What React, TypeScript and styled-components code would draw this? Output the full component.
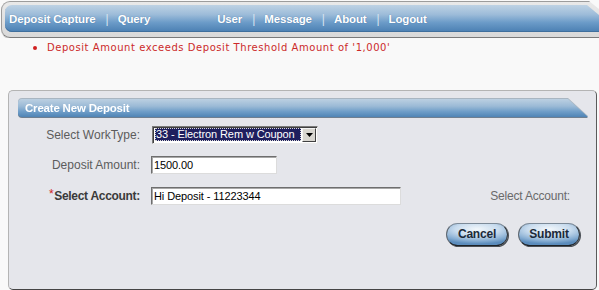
import type { FC } from "react";
import styled, { createGlobalStyle } from "styled-components";

const GlobalStyle = createGlobalStyle`
  html, body {
    margin: 0;
    padding: 0;
    background: #f9f9f9;
    font-family: "Liberation Sans", Arial, sans-serif;
  }
`;

const navLeft = ["Deposit Capture", "Query"];
const navRight = ["User", "Message", "About", "Logout"];

const NavItems: FC<{ items: string[] }> = ({ items }) => (
  <NavGroup>
    {items.map((item, i) => (
      <NavGroupItem key={item}>
        {i > 0 && <NavSep>|</NavSep>}
        <NavLink>{item}</NavLink>
      </NavGroupItem>
    ))}
  </NavGroup>
);

const App: FC = () => {
  return (
    <>
      <GlobalStyle />
      <Page>
        <NavFrame>
          <NavBar>
            <NavItems items={navLeft} />
            <NavRight>
              <NavItems items={navRight} />
            </NavRight>
          </NavBar>
        </NavFrame>

        <ErrorList>
          <ErrorItem>Deposit Amount exceeds Deposit Threshold Amount of '1,000'</ErrorItem>
        </ErrorList>

        <Panel>
          <PanelHeaderWrap>
            <PanelHeader>Create New Deposit</PanelHeader>
          </PanelHeaderWrap>

          <Form>
            <Row $height={30}>
              <Label>Select WorkType:</Label>
              <SelectBox>
                <SelectValue>33 - Electron Rem w Coupon</SelectValue>
                <SelectArrow>
                  <svg width="7" height="4" viewBox="0 0 7 4">
                    <path d="M0 0h7L3.5 4z" fill="#000" />
                  </svg>
                </SelectArrow>
              </SelectBox>
            </Row>
            <Row $height={30}>
              <Label>Deposit Amount:</Label>
              <TextInput $width={126}>1500.00</TextInput>
            </Row>
            <Row $height={32}>
              <Label $required>
                <Star>*</Star>Select Account:
              </Label>
              <TextInput $width={250}>Hi Deposit - 11223344</TextInput>
              <Hint>Select Account:</Hint>
            </Row>
            <Buttons>
              <PillButton>Cancel</PillButton>
              <PillButton>Submit</PillButton>
            </Buttons>
          </Form>
        </Panel>
      </Page>
    </>
  );
};

export default App;

const Page = styled.div`
  width: 599px;
  height: 290px;
  overflow: hidden;
  display: flex;
  flex-direction: column;
`;

const NavFrame = styled.div`
  margin: 1px 0 0 1px;
  height: 29px;
  padding: 3px 0 3px 3px;
  border: 1px solid #9c9c9c;
  border-right: none;
  border-bottom-color: #7a7a7a;
  border-radius: 9px 0 0 9px;
  background: linear-gradient(#e9e9e9, #d9d9d9);
  clip-path: polygon(0 0, calc(100% - 10px) 0, 100% 8px, 100% 100%, 0 100%);
  box-shadow: 0 1px 0 #d0d0d0;
`;

const NavBar = styled.div`
  height: 27px;
  display: flex;
  align-items: center;
  padding-left: 4px;
  border-radius: 7px 0 0 7px;
  background: linear-gradient(#bed2e4 0%, #9dbcd9 35%, #6b9bc8 65%, #4a7fb2 100%);
  box-shadow: inset 0 -1px 0 #3f6f9d;
  clip-path: polygon(0 0, calc(100% - 12px) 0, 100% 10px, 100% 100%, 0 100%);
`;

const NavGroup = styled.div`
  display: flex;
  align-items: center;
`;

const NavGroupItem = styled.span`
  display: flex;
  align-items: center;
`;

const NavRight = styled.div`
  margin-left: 67px;
`;

const NavLink = styled.span`
  color: #ffffff;
  font-weight: bold;
  font-size: 11.5px;
  letter-spacing: -0.15px;
  text-shadow: 0 0 1px rgba(40, 80, 130, 0.6);
`;

const NavSep = styled.span`
  color: #d6e3ef;
  font-size: 12px;
  margin: 0 9px 0 10px;
`;

const ErrorList = styled.ul`
  margin: 4px 0 0 0;
  padding: 0 0 0 47px;
  list-style: none;
`;

const ErrorItem = styled.li`
  position: relative;
  color: #cc2a2a;
  font-family: "DejaVu Sans", Verdana, sans-serif;
  font-size: 10px;
  letter-spacing: 0.55px;
  line-height: 12px;

  &::before {
    content: "";
    position: absolute;
    left: -14px;
    top: 4px;
    width: 4px;
    height: 4px;
    border-radius: 50%;
    background: #d02020;
  }
`;

const Panel = styled.div`
  margin: 36px 2px 0 8px;
  border: 1px solid #b4b4b4;
  border-right-color: #5a5a5a;
  border-bottom-color: #444;
  border-radius: 5px;
  background: #e5e6eb;
  padding-top: 8px;
  box-sizing: border-box;
  height: 201px;
`;

const PanelHeaderWrap = styled.div`
  margin: 0 8px 0 9px;
  filter: drop-shadow(0 1px 0 #6f7f90) drop-shadow(0 -1px 0 #a9b6c2);
`;

const PanelHeader = styled.div`
  height: 18px;
  display: flex;
  align-items: center;
  padding-left: 7px;
  border-radius: 4px 0 0 4px;
  background: linear-gradient(#bcd0e2 0%, #9bbad6 40%, #6e9dc8 70%, #4f84b5 100%);
  clip-path: polygon(0 0, calc(100% - 20px) 0, 100% 100%, 0 100%);
  color: #ffffff;
  font-weight: bold;
  font-size: 11.5px;
  letter-spacing: -0.2px;
`;

const Form = styled.div`
  display: flex;
  flex-direction: column;
  padding-top: 3px;
`;

const Row = styled.div<{ $height: number }>`
  height: ${({ $height }) => $height}px;
  display: flex;
  align-items: center;
`;

const Label = styled.span<{ $required?: boolean }>`
  width: 131px;
  margin-right: 11px;
  text-align: right;
  font-size: 12px;
  font-weight: ${({ $required }) => ($required ? "bold" : "normal")};
  color: ${({ $required }) => ($required ? "#3a3a3a" : "#5c5c5c")};
  letter-spacing: ${({ $required }) => ($required ? "-0.3px" : "0")};
  white-space: nowrap;
`;

const Star = styled.span`
  color: #d02525;
  font-weight: normal;
  position: relative;
  top: -2px;
  margin-right: 1px;
`;

const SelectBox = styled.div`
  width: 166px;
  height: 18px;
  margin-left: 1px;
  box-sizing: border-box;
  display: flex;
  align-items: center;
  padding: 1px;
  border: 1px solid;
  border-color: #7a7a7a #e8e8e8 #e8e8e8 #7a7a7a;
  background: #ffffff;
  box-shadow: inset 1px 1px 0 #404040;
`;

const SelectValue = styled.span`
  flex: 1;
  height: 13px;
  margin: 0 1px 0 1px;
  padding-left: 1px;
  background: #1f1f5e;
  outline: 1px dotted #d8d8d8;
  outline-offset: -1px;
  color: #ffffff;
  font-size: 11px;
  line-height: 13px;
  letter-spacing: -0.1px;
  white-space: nowrap;
`;

const SelectArrow = styled.span`
  width: 14px;
  height: 14px;
  box-sizing: border-box;
  display: flex;
  align-items: center;
  justify-content: center;
  background: #d8d6d0;
  border: 1px solid;
  border-color: #f4f4f4 #404040 #404040 #f4f4f4;
`;

const TextInput = styled.div<{ $width: number }>`
  width: ${({ $width }) => $width}px;
  height: 18px;
  box-sizing: border-box;
  padding: 0 2px;
  border: 1px solid;
  border-color: #6e6e6e #dcdcdc #dcdcdc #6e6e6e;
  box-shadow: inset 1px 1px 0 #a8a8a8;
  background: #ffffff;
  color: #000;
  font-size: 11px;
  line-height: 16px;
  letter-spacing: -0.1px;
  white-space: nowrap;
`;

const Hint = styled.span`
  margin-left: auto;
  margin-right: 26px;
  color: #6a6a6a;
  font-size: 12px;
  letter-spacing: -0.2px;
`;

const Buttons = styled.div`
  display: flex;
  justify-content: flex-end;
  gap: 10px;
  margin-top: 11px;
  padding-right: 16px;
`;

const PillButton = styled.button`
  height: 23px;
  padding: 0 10px;
  min-width: 62px;
  border-radius: 12px;
  border: 1px solid;
  border-color: #7c8a98 #2e3338 #1e2226 #5c6670;
  background: radial-gradient(ellipse 80% 70% at 50% 25%, #f2f7fb 0%, #c9dcee 45%, #86add2 80%, #5b8cbc 100%);
  box-shadow: 1px 1px 0 #4a4f55;
  color: #1c2a3a;
  font-family: "Liberation Sans", Arial, sans-serif;
  font-weight: bold;
  font-size: 12px;
  letter-spacing: -0.2px;
  cursor: pointer;
`;
